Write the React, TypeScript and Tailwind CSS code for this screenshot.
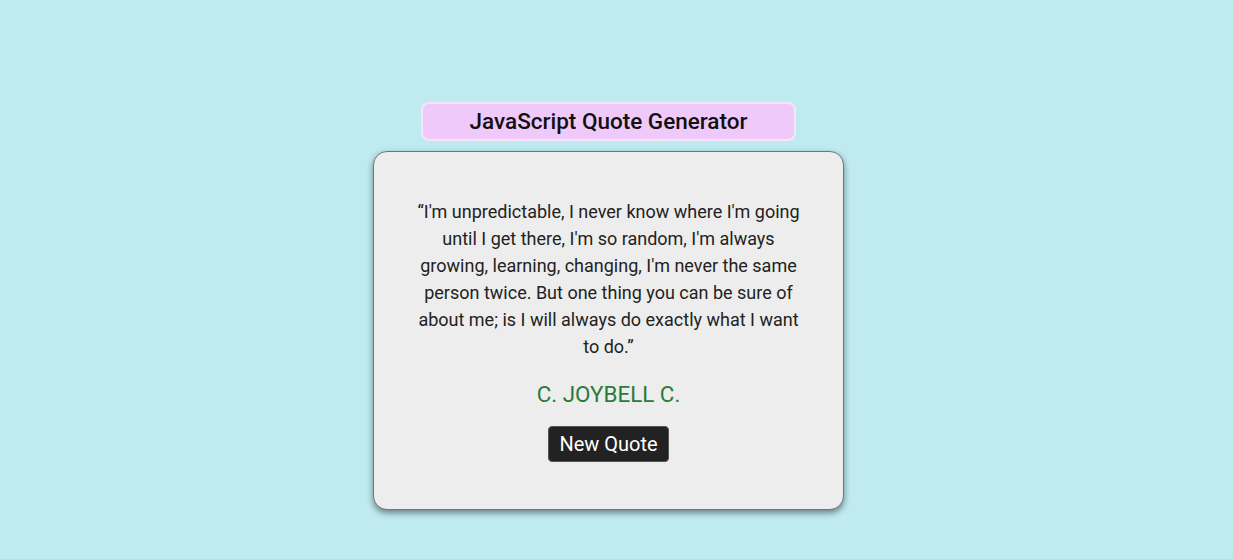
export default function App() {
  return (
    <div className="min-h-[559px] w-full bg-[#bfeaf0] font-['Roboto',sans-serif] flex flex-col items-center pt-[102px] pr-4">
      {/* title */}
      <div className="w-[375px] h-[39px] flex items-center justify-center rounded-lg border-2 border-[#f6e4fb] bg-[#f0c9fb] text-[22.5px] font-medium text-[#111]">
        JavaScript Quote Generator
      </div>

      {/* card */}
      <div className="mt-[10px] w-[471px] h-[359px] rounded-[14px] border border-[#6f7778] bg-[#ededed] shadow-[0_3px_6px_rgba(0,0,0,0.45)] flex flex-col items-center px-[40px] pt-[46px]">
        <p className="text-center text-[18px] leading-[27px] text-[#222]">
          “I'm unpredictable, I never know where I'm going until I get there, I'm so random, I'm always growing, learning, changing, I'm never the same person twice. But one thing you can be sure of about me; is I will always do exactly what I want to do.”
        </p>
        <div className="mt-[20px] text-[22.4px] leading-[28px] text-[#2a7a3b]">C. JOYBELL C.</div>
        <button className="mt-[18px] h-[36px] px-[10px] rounded-[4px] border border-[#555] bg-[#222] text-white text-[20px] leading-none">
          New Quote
        </button>
      </div>
    </div>
  );
}
